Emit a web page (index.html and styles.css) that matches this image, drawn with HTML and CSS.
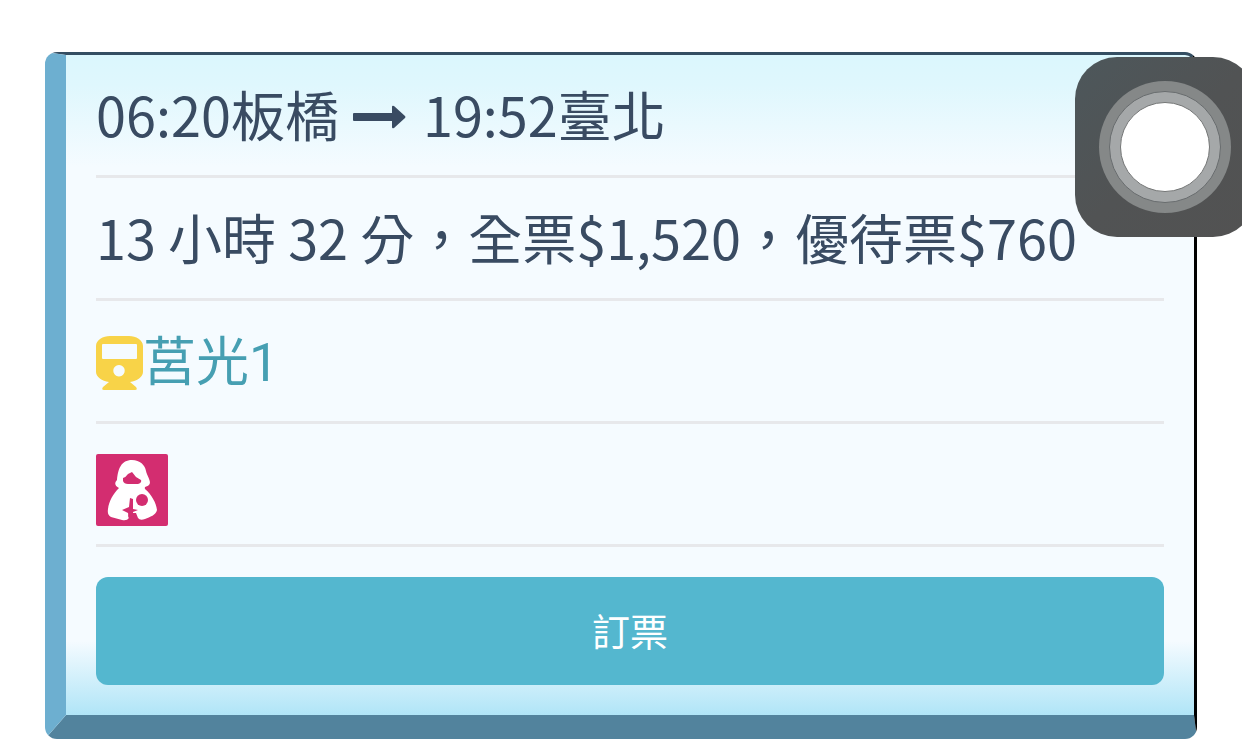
FILE: index.html
```html
<!DOCTYPE html>
<html lang="zh-Hant">
<head>
<meta charset="utf-8">
<meta name="viewport" content="width=device-width, initial-scale=1">
<title>列車時刻</title>
<link rel="stylesheet" href="styles.css">
</head>
<body>
<main class="page">
  <article class="trip">
    <div class="row">
      <span>06:20板橋</span>
      <svg class="arrow" viewBox="0 0 54 26" aria-hidden="true"><path d="M2 9h38V3q0-2 2-1l11 10q1 1 0 2L42 24q-2 1-2-1v-6H2q-1 0-1-1v-6q0-1 1-1z"/></svg>
      <span>19:52臺北</span>
    </div>
    <div class="row">13 小時 32 分，全票$1,520，優待票$760</div>
    <div class="row row-train">
      <a class="train" href="#train"><svg class="train-icon" viewBox="0 0 47 56" aria-hidden="true"><path fill-rule="evenodd" d="M14 1H33C40 1 47 5 47 11V37C47 42 41 46 34 47L40 52Q42 55 39 55H8Q5 55 7 52L13 47C6 46 0 42 0 37V11C0 5 7 1 14 1ZM6 10Q6 9 7 9H40Q41 9 41 10V23Q41 24 40 24H7Q6 24 6 23ZM23 30a5.700 5.700 0 1 0 .01 0Z"/></svg><span>莒光1</span></a>
    </div>
    <div class="row">
      <svg class="nursing" viewBox="0 0 72 72" role="img" aria-label="哺乳室"><rect width="72" height="72" rx="2" fill="#d32d70"/><path fill="#fff" fill-rule="evenodd" d="M36 6C44 6 49 11 50 17C51 22 56 28 53 31C51 33 48 32 49 35C56 41 60 49 61 56C60 61 54 63 49 65Q44 67 42 64L40 59L34 59Q31 61 33 64Q31 67 26 66L15 63Q11 61 12 55C13 47 17 40 23 34C19 32 18 29 21 26C22 15 25 6 36 6ZM27 27Q28 30 32 30H42Q46 29 45 26L40 23L36 18L32 20Q30 23 27 24Z"/><path d="M34 44l3 1v10l5 1-5 2v7h-4l-1-6-6-3 7-3z" fill="#d32d70"/><circle cx="46" cy="46" r="6" fill="#d32d70"/></svg>
    </div>
    <button class="book" type="button">訂票</button>
  </article>
  <button class="assist" type="button" aria-label="輔助觸控"><span class="ring"><span class="ring-inner"><span class="dot"></span></span></span></button>
</main>
</body>
</html>
```
FILE: styles.css
```css
* { box-sizing: border-box; }

body {
  margin: 0;
  background: #fff;
  color: #394b62;
  font-family: "Noto Sans CJK TC", sans-serif;
}

.page {
  position: relative;
  padding: 52px 45px 16px;
  overflow: hidden;
}

.trip {
  padding: 0 30px 30px;
  border-style: solid;
  border-width: 3px 3px 24px 21px;
  border-color: #344e62 #000 #52839d #6dafd0;
  border-radius: 12px;
  background: linear-gradient(to bottom, #dbf7fd 0, #dff7fd 30px, #f5fbff 112px, #f5fbff calc(100% - 74px), #b0e5f7 100%) padding-box;
}

.row {
  display: flex;
  align-items: center;
  min-height: 123px;
  padding-bottom: 2px;
  border-bottom: 3px solid #e7e8eb;
  font-size: 54px;
  line-height: 80px;
}

.row-train {
  padding: 4px 0 0;
}

.arrow {
  width: 54px;
  height: 26px;
  margin: 6px 17px 0 13px;
  fill: #394b62;
}

.train {
  display: flex;
  align-items: center;
  color: #469fb2;
  font-family: Roboto, "Noto Sans CJK TC", sans-serif;
  font-size: 53px;
  text-decoration: none;
}

.train-icon {
  width: 47px;
  height: 56px;
  fill: #f8d348;
}

.nursing {
  width: 72px;
  height: 72px;
  margin-top: 14px;
}

.book {
  display: block;
  width: 100%;
  height: 108px;
  margin-top: 30px;
  padding: 0 0 4px;
  border: 0;
  border-radius: 12px;
  background: #54b7cf;
  color: #fff;
  font-family: inherit;
  font-size: 38px;
}

.assist {
  position: absolute;
  top: 57px;
  right: -13px;
  display: grid;
  place-items: center;
  width: 180px;
  height: 180px;
  padding: 0;
  border: 0;
  border-radius: 42px;
  background: linear-gradient(135deg, #4d575b, #515354 50%, #525252);
}

.ring,
.ring-inner,
.dot {
  display: grid;
  place-items: center;
  border-radius: 50%;
}

.ring {
  width: 132px;
  height: 132px;
  background: #858888;
}

.ring-inner {
  width: 112px;
  height: 112px;
  border: 1px solid #686c6e;
  background: #a5a8a9;
}

.dot {
  width: 90px;
  height: 90px;
  border: 1px solid #747676;
  background: #fff;
}
```
